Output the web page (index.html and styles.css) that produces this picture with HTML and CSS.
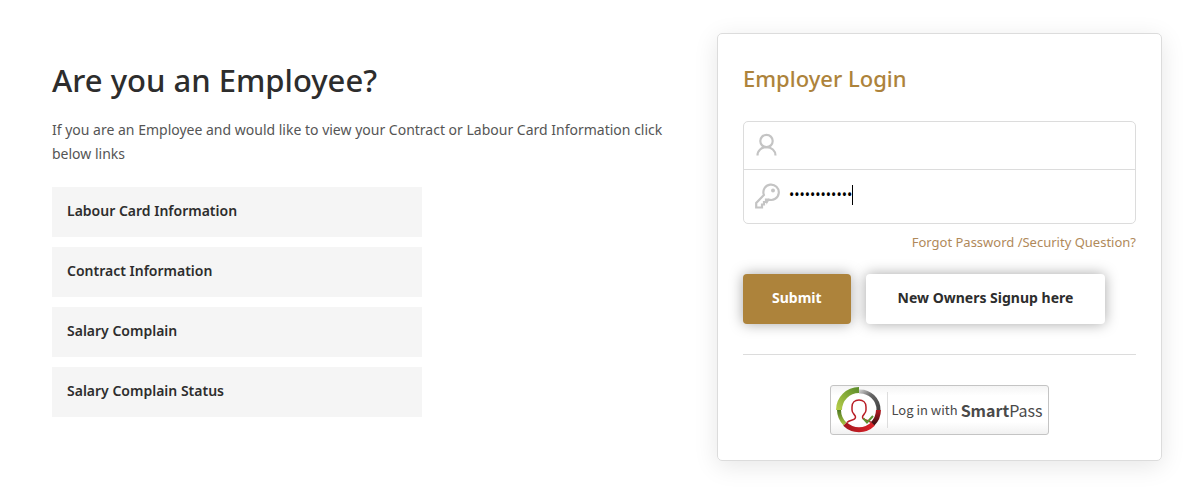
FILE: index.html
```html
<!DOCTYPE html>
<html lang="en">
<head>
<meta charset="utf-8">
<meta name="viewport" content="width=device-width, initial-scale=1">
<title>Employer Login</title>
<link rel="stylesheet" href="styles.css">
</head>
<body>
<main class="page">
  <section class="employee">
    <h1 class="employee-title">Are you an Employee?</h1>
    <p class="employee-text">If you are an Employee and would like to view your Contract or Labour Card Information click below links</p>
    <nav class="links">
      <a class="link" href="#">Labour Card Information</a>
      <a class="link" href="#">Contract Information</a>
      <a class="link" href="#">Salary Complain</a>
      <a class="link" href="#">Salary Complain Status</a>
    </nav>
  </section>
  <section class="card">
    <h2 class="card-title">Employer Login</h2>
    <form class="form">
      <div class="fields">
        <div class="field">
          <label class="field-icon" for="user" aria-label="User name">
            <svg width="26" height="26" viewBox="0 0 26 26" fill="none" stroke="#c4c4c4" stroke-width="2.200"><circle cx="11.500" cy="9" r="6.200"/><path d="M2.500 23.500c0-5 4-8.300 9-8.300s9 3.300 9 8.300"/></svg>
          </label>
          <input class="input" id="user" type="text">
        </div>
        <div class="field field-password">
          <label class="field-icon" for="pass" aria-label="Password">
            <svg width="26" height="26" viewBox="0 0 26 26" fill="none" stroke="#c4c4c4" stroke-width="2.200"><path d="M8.900 12A7.700 7.700 0 1 1 13.500 16.500L12.500 18v-1.500H11v2.500H9v2.500H7v3H1.200V20z"/><circle cx="18" cy="7.500" r="2" fill="#c4c4c4" stroke="none"/></svg>
          </label>
          <input class="input" id="pass" type="password" value="abcdefghijkl">
          <span class="caret"></span>
        </div>
      </div>
      <a class="forgot" href="#">Forgot Password /Security Question?</a>
      <div class="actions">
        <button class="button button-primary" type="submit">Submit</button>
        <button class="button" type="button">New Owners Signup here</button>
      </div>
    </form>
    <div class="alternative">
      <button class="smartpass" type="button">
        <svg class="smartpass-logo" width="46" height="46" viewBox="0 0 46 46" fill="none">
          <defs>
            <linearGradient id="green" x1="0" y1="1" x2="1" y2="0"><stop offset="0" stop-color="#b4cc48"/><stop offset="1" stop-color="#5f8f2c"/></linearGradient>
            <linearGradient id="grey" x1="0" y1="0" x2="1" y2="1"><stop offset="0" stop-color="#c8c8c8"/><stop offset="0.400" stop-color="#666"/><stop offset="1" stop-color="#444"/></linearGradient>
            <linearGradient id="red" x1="0" y1="0" x2="1" y2="0"><stop offset="0" stop-color="#a5181e"/><stop offset="1" stop-color="#da2128"/></linearGradient>
            <linearGradient id="dark" x1="0" y1="0" x2="0" y2="1"><stop offset="0" stop-color="#b71c22"/><stop offset="1" stop-color="#3e1114"/></linearGradient>
            <linearGradient id="leaf" x1="0" y1="0" x2="0" y2="1"><stop offset="0" stop-color="#4f7a24"/><stop offset="1" stop-color="#a6c040"/></linearGradient>
          </defs>
          <path d="M3 23A20 20 0 0 1 23 3" stroke="url(#green)" stroke-width="6"/>
          <path d="M3 23a20 20 0 0 0 6 14" stroke="url(#leaf)" stroke-width="4"/>
          <path d="M23 4.500A18.500 18.500 0 0 1 42.500 23" stroke="url(#grey)" stroke-width="4"/>
          <path d="M42.500 23a20 20 0 0 1-6 14" stroke="url(#dark)" stroke-width="5"/>
          <path d="M9 37a20 20 0 0 0 28 0" stroke="url(#red)" stroke-width="5"/>
          <path d="M11 35.500c3-3 8.500-1.500 8.500-5.500 0-2.500-3.500-3-3.500-7v-3c0-4.500 3-7 7-7s7 2.500 7 7v3c0 4-3.500 4.500-3.500 7 0 4 5.500 2.500 8.500 5.500" stroke="#b91e26" stroke-width="1.500"/>
          <path d="M27.500 31.500l3.500 4 6-6.500" stroke="#5e922e" stroke-width="2"/>
        </svg>
        <span class="smartpass-lead">Log in with</span>
        <span class="smartpass-name"><b>Smart</b>Pass</span>
      </button>
    </div>
  </section>
</main>
</body>
</html>
```
FILE: styles.css
```css
* {
  box-sizing: border-box;
}

body {
  margin: 0;
  background: #fff;
  color: #2d2d2d;
  font-family: "Noto Sans", "Open Sans", sans-serif;
  font-size: 14px;
  line-height: 24px;
}

.page {
  display: grid;
  grid-template-columns: minmax(0, 7fr) minmax(0, 5fr);
  align-items: start;
  gap: 42px;
  padding: 33px 41px 33px 52px;
}

.employee {
  padding-top: 23px;
}

.employee-title {
  margin: 0 0 14px;
  font-size: 31px;
  font-weight: 500;
  line-height: 48px;
}

.employee-text {
  margin: 0;
  color: #555;
}

.links {
  display: grid;
  gap: 10px;
  max-width: 370px;
  margin-top: 21px;
}

.link {
  padding: 12px 15px 14px;
  background: #f5f5f5;
  color: #2d2d2d;
  font-weight: 600;
  text-decoration: none;
}

.card {
  padding: 24px 25px 25px;
  border: 1px solid #dcdcdc;
  border-radius: 5px;
  box-shadow: 0 5px 25px rgba(0, 0, 0, 0.1);
}

.card-title {
  margin: 0 0 23px;
  color: #ad833b;
  font-size: 22px;
  font-weight: 500;
  line-height: 40px;
}

.form {
  display: grid;
}

.fields {
  border: 1px solid #dcdcdc;
  border-radius: 5px;
}

.field {
  position: relative;
  display: flex;
  align-items: center;
  gap: 8px;
  height: 47px;
  padding: 0 10px 2px 11px;
}

.field-password {
  height: 54px;
  border-top: 1px solid #dcdcdc;
}

.field-icon {
  flex: none;
  height: 26px;
}

.input {
  flex: 1;
  min-width: 0;
  height: 30px;
  padding: 0 0 2px;
  border: 0;
  outline: 0;
  background: none;
  color: #000;
  font: 14px "Noto Sans", sans-serif;
}

.caret {
  position: absolute;
  top: 15px;
  left: 108px;
  width: 1px;
  height: 20px;
  background: #000;
}

.forgot {
  justify-self: end;
  margin-top: 6px;
  color: #b0895a;
  font-size: 13px;
  text-decoration: none;
}

.actions {
  display: flex;
  gap: 15px;
  margin-top: 20px;
}

.button {
  height: 50px;
  padding: 0 32px 3px;
  border: 0;
  border-radius: 4px;
  background: #fff;
  box-shadow: 0 0 14px rgba(0, 0, 0, 0.35);
  color: #2d2d2d;
  font: 700 14px "Noto Sans", sans-serif;
}

.button-primary {
  padding: 0 29px 3px;
  background: #ad833b;
  color: #fff;
}

.alternative {
  display: flex;
  justify-content: center;
  margin-top: 30px;
  padding-top: 30px;
  border-top: 1px solid #dcdcdc;
}

.smartpass {
  display: flex;
  align-items: center;
  height: 50px;
  padding: 0 5px;
  border: 1px solid #c4c4c4;
  border-radius: 3px;
  background: linear-gradient(#f4f4f4, #fff 20%, #fff 75%, #f1f1f1);
  color: #4a4a4a;
  font: 13px/20px "Noto Sans CJK SC", sans-serif;
}

.smartpass-lead {
  margin-left: 5px;
  padding: 8px 3px;
  border-left: 1px solid #ddd;
}

.smartpass-name {
  font-size: 16px;
}
```
